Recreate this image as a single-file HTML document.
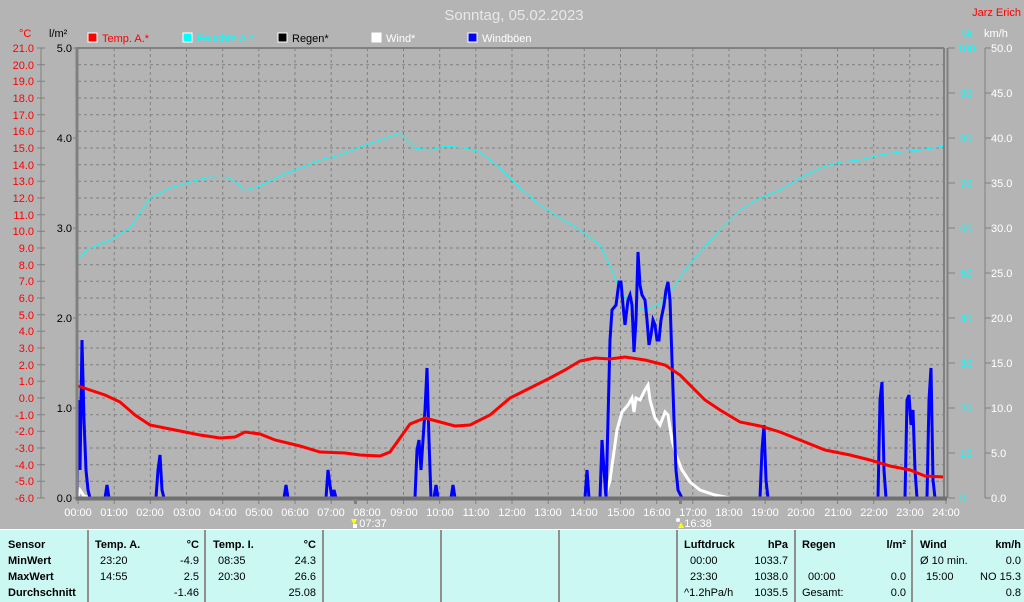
<!DOCTYPE html>
<html><head><meta charset="utf-8"><style>
html,body{margin:0;padding:0;background:#b4b4b4;width:1024px;height:602px;overflow:hidden}
svg{display:block;font-family:"Liberation Sans",sans-serif}
</style></head><body>
<svg width="1024" height="602" viewBox="0 0 1024 602" xmlns="http://www.w3.org/2000/svg">
<rect width="1024" height="602" fill="#b4b4b4"/>
<text x="514" y="20" font-size="15" fill="#e8e8e8" text-anchor="middle">Sonntag, 05.02.2023</text>
<text x="1021" y="16" font-size="11" fill="#ff0000" text-anchor="end">Jarz Erich</text>
<g font-size="11">
<rect x="88" y="33" width="9" height="9" fill="#ff0000" stroke="#fff"/><text x="102" y="42" fill="#ff0000">Temp. A.*</text>
<rect x="183" y="33" width="9" height="9" fill="#00ffff" stroke="#fff"/><text x="197" y="42" fill="#00ffff">Feuchte A.*</text>
<rect x="278" y="33" width="9" height="9" fill="#000" stroke="#fff"/><text x="292" y="42" fill="#000">Regen*</text>
<rect x="372" y="33" width="9" height="9" fill="#fff" stroke="#fff"/><text x="386" y="42" fill="#fff">Wind*</text>
<rect x="468" y="33" width="9" height="9" fill="#0000ff" stroke="#fff"/><text x="482" y="42" fill="#fff">Windböen</text>
</g>
<text x="19" y="37" font-size="11" fill="#ff0000">°C</text>
<text x="49" y="37" font-size="11" fill="#000">l/m²</text>
<text x="962" y="37" font-size="11" fill="#00ffff">%</text>
<text x="984" y="37" font-size="11" fill="#fff">km/h</text>
<g stroke="#808080" stroke-dasharray="3,3" stroke-width="1">
<path d="M78 64.7H944M78 81.3H944M78 98H944M78 114.7H944M78 131.3H944M78 148H944M78 164.7H944M78 181.3H944M78 198H944M78 214.7H944M78 231.3H944M78 248H944M78 264.7H944M78 281.3H944M78 298H944M78 314.7H944M78 331.3H944M78 348H944M78 364.7H944M78 381.3H944M78 398H944M78 414.7H944M78 431.3H944M78 448H944M78 464.7H944M78 481.3H944"/>
<path d="M114.2 48V498M150.3 48V498M186.5 48V498M222.7 48V498M258.8 48V498M295 48V498M331.2 48V498M367.3 48V498M403.5 48V498M439.7 48V498M475.8 48V498M512 48V498M548.2 48V498M584.3 48V498M620.5 48V498M656.7 48V498M692.8 48V498M729 48V498M765.2 48V498M801.3 48V498M837.5 48V498M873.7 48V498M909.8 48V498"/>
</g>
<g stroke="#808080">
<path d="M37 48H45M37 64.7H45M37 81.3H45M37 98H45M37 114.7H45M37 131.3H45M37 148H45M37 164.7H45M37 181.3H45M37 198H45M37 214.7H45M37 231.3H45M37 248H45M37 264.7H45M37 281.3H45M37 298H45M37 314.7H45M37 331.3H45M37 348H45M37 364.7H45M37 381.3H45M37 398H45M37 414.7H45M37 431.3H45M37 448H45M37 464.7H45M37 481.3H45M37 498H45"/>
<path d="M73 48H77M73 138H77M73 228H77M73 318H77M73 408H77M73 498H77"/>
<path d="M948 48H955M948 93H955M948 138H955M948 183H955M948 228H955M948 273H955M948 318H955M948 363H955M948 408H955M948 453H955M948 498H955"/>
<path d="M985 48H991M985 93H991M985 138H991M985 183H991M985 228H991M985 273H991M985 318H991M985 363H991M985 408H991M985 453H991M985 498H991"/>
<path d="M78 499V504M114.2 499V504M150.3 499V504M186.5 499V504M222.7 499V504M258.8 499V504M295 499V504M331.2 499V504M367.3 499V504M403.5 499V504M439.7 499V504M475.8 499V504M512 499V504M548.2 499V504M584.3 499V504M620.5 499V504M656.7 499V504M692.8 499V504M729 499V504M765.2 499V504M801.3 499V504M837.5 499V504M873.7 499V504M909.8 499V504M946 499V504"/>
</g>
<g font-size="11" fill="#ff0000" text-anchor="end">
<text x="34" y="52">21.0</text><text x="34" y="69">20.0</text><text x="34" y="85">19.0</text><text x="34" y="102">18.0</text><text x="34" y="119">17.0</text><text x="34" y="135">16.0</text><text x="34" y="152">15.0</text><text x="34" y="169">14.0</text><text x="34" y="185">13.0</text><text x="34" y="202">12.0</text><text x="34" y="219">11.0</text><text x="34" y="235">10.0</text><text x="34" y="252">9.0</text><text x="34" y="269">8.0</text><text x="34" y="285">7.0</text><text x="34" y="302">6.0</text><text x="34" y="319">5.0</text><text x="34" y="335">4.0</text><text x="34" y="352">3.0</text><text x="34" y="369">2.0</text><text x="34" y="385">1.0</text><text x="34" y="402">0.0</text><text x="34" y="419">-1.0</text><text x="34" y="435">-2.0</text><text x="34" y="452">-3.0</text><text x="34" y="469">-4.0</text><text x="34" y="485">-5.0</text><text x="34" y="502">-6.0</text>
</g>
<g font-size="11" fill="#000" text-anchor="end">
<text x="72" y="52">5.0</text><text x="72" y="142">4.0</text><text x="72" y="232">3.0</text><text x="72" y="322">2.0</text><text x="72" y="412">1.0</text><text x="72" y="502">0.0</text>
</g>
<g font-size="11" fill="#00ffff">
<text x="957" y="52">100</text><text x="960" y="97">90</text><text x="960" y="142">80</text><text x="960" y="187">70</text><text x="960" y="232">60</text><text x="960" y="277">50</text><text x="960" y="322">40</text><text x="960" y="367">30</text><text x="960" y="412">20</text><text x="960" y="457">10</text><text x="960" y="502">0</text>
</g>
<g font-size="11" fill="#fff">
<text x="991" y="52">50.0</text><text x="991" y="97">45.0</text><text x="991" y="142">40.0</text><text x="991" y="187">35.0</text><text x="991" y="232">30.0</text><text x="991" y="277">25.0</text><text x="991" y="322">20.0</text><text x="991" y="367">15.0</text><text x="991" y="412">10.0</text><text x="991" y="457">5.0</text><text x="991" y="502">0.0</text>
</g>
<g font-size="11" fill="#fff" text-anchor="middle">
<text x="78" y="516">00:00</text><text x="114" y="516">01:00</text><text x="150" y="516">02:00</text><text x="187" y="516">03:00</text><text x="223" y="516">04:00</text><text x="259" y="516">05:00</text><text x="295" y="516">06:00</text><text x="331" y="516">07:00</text><text x="367" y="516">08:00</text><text x="404" y="516">09:00</text><text x="440" y="516">10:00</text><text x="476" y="516">11:00</text><text x="512" y="516">12:00</text><text x="548" y="516">13:00</text><text x="584" y="516">14:00</text><text x="621" y="516">15:00</text><text x="657" y="516">16:00</text><text x="693" y="516">17:00</text><text x="729" y="516">18:00</text><text x="765" y="516">19:00</text><text x="801" y="516">20:00</text><text x="838" y="516">21:00</text><text x="874" y="516">22:00</text><text x="910" y="516">23:00</text><text x="946" y="516">24:00</text>
<text x="373" y="527">07:37</text><text x="698" y="527">16:38</text>
</g>
<path d="M351 519l3 6 3-6z" fill="#ffff00"/><rect x="353" y="524" width="4" height="4" fill="#fff"/>
<path d="M678 528l3-6 3 6z" fill="#ffff00"/><circle cx="678" cy="520" r="2" fill="#fff"/>
<polyline fill="none" stroke="#00ffff" stroke-width="1" points="78,258 90,248 110,240 130,228 150,198 170,188 190,182 210,177 230,178 245,190 260,186 280,176 300,168 320,160 340,155 360,147 380,140 400,133 415,148 430,150 445,146 465,148 480,152 500,168 520,188 540,205 560,218 580,230 600,245 612,270 620,290 630,304 645,310 660,304 672,290 685,270 700,252 720,230 740,210 760,198 780,190 800,178 820,168 840,162 860,160 880,155 900,152 920,150 945,146"/>
<polyline fill="none" stroke="#ffffff" stroke-width="3" points="78,496 80,490 84,496 90,498 605,498 610,480 617,430 622,412 628,405 632,398 634,412 636,398 640,400 645,390 648,385 650,400 655,418 660,425 665,412 668,415 672,440 676,455 682,470 690,482 700,490 715,495 730,498"/>
<polyline fill="none" stroke="#0000ff" stroke-width="3" points="77,498 78,400 80,470 82,340 84,420 86,470 88,490 90,498 105,498 107,485 109,498 156,498 158,470 160,455 162,490 164,498 284,498 286,485 288,498 326,498 328,470 330,485 332,498 334,490 336,498 415,498 417,450 419,440 421,470 423,440 425,410 427,368 429,440 431,498 434,498 436,485 438,498 451,498 453,485 455,498 585,498 587,470 589,498 600,498 602,440 604,470 606,498 608,420 610,340 612,310 616,305 619,282 621,282 623,305 625,325 628,300 630,295 632,305 634,352 636,320 638,252 640,285 642,295 645,300 647,320 649,345 651,335 653,320 655,325 657,340 659,340 661,320 664,305 666,290 668,282 670,300 672,360 674,420 676,470 678,490 682,498 760,498 762,450 764,425 766,480 768,498 878,498 880,400 882,382 884,470 886,498 905,498 907,400 909,395 911,425 913,410 915,470 917,498 927,498 929,400 931,368 933,480 935,498 945,498"/>
<polyline fill="none" stroke="#ff0000" stroke-width="3" points="78,386 90,390 105,395 120,402 135,415 150,425 165,428 185,432 200,435 220,438 235,437 245,432 260,434 275,440 300,446 320,452 345,453 360,455 380,456 390,452 400,438 410,424 425,418 440,422 455,426 470,425 490,415 510,398 530,388 550,378 565,370 580,361 595,358 610,359 625,357 645,360 665,365 680,375 690,385 705,400 720,410 740,422 760,426 780,432 800,440 825,450 850,455 870,460 890,466 910,470 925,476 945,477"/>
<g stroke="#808080" fill="none">
<path d="M77 48V498" stroke-width="3"/>
<path d="M76 48H944" stroke-width="2"/>
<path d="M944 48V498M947.5 48V498" stroke-width="2"/>
<path d="M41 48V498" stroke-width="1"/>
<path d="M985 48V498" stroke-width="1"/>
</g>
<path d="M75.5 498.5H947" stroke="#707070" stroke-width="4"/>
<rect x="354" y="499" width="3" height="5" fill="#808080"/><rect x="679" y="499" width="3" height="5" fill="#808080"/>
<rect x="0" y="530" width="1024" height="72" fill="#ccf8f4"/>
<path d="M0 529.5H1024" stroke="#fff" stroke-width="1"/>
<g stroke="#909090" stroke-width="2"><path d="M88 530V602M205 530V602M323 530V602M441 530V602M559 530V602M677 530V602M795 530V602M912 530V602"/></g>
<g font-size="11" fill="#000">
<g font-weight="bold"><text x="8" y="548">Sensor</text><text x="8" y="564">MinWert</text><text x="8" y="580">MaxWert</text><text x="8" y="596">Durchschnitt</text>
<text x="95" y="548">Temp. A.</text><text x="199" y="548" text-anchor="end">°C</text>
<text x="213" y="548">Temp. I.</text><text x="316" y="548" text-anchor="end">°C</text>
<text x="684" y="548">Luftdruck</text><text x="788" y="548" text-anchor="end">hPa</text>
<text x="802" y="548">Regen</text><text x="906" y="548" text-anchor="end">l/m²</text>
<text x="920" y="548">Wind</text><text x="1021" y="548" text-anchor="end">km/h</text></g>
<text x="100" y="564">23:20</text><text x="199" y="564" text-anchor="end">-4.9</text>
<text x="100" y="580">14:55</text><text x="199" y="580" text-anchor="end">2.5</text>
<text x="199" y="596" text-anchor="end">-1.46</text>
<text x="218" y="564">08:35</text><text x="316" y="564" text-anchor="end">24.3</text>
<text x="218" y="580">20:30</text><text x="316" y="580" text-anchor="end">26.6</text>
<text x="316" y="596" text-anchor="end">25.08</text>
<text x="690" y="564">00:00</text><text x="788" y="564" text-anchor="end">1033.7</text>
<text x="690" y="580">23:30</text><text x="788" y="580" text-anchor="end">1038.0</text>
<text x="684" y="596">^1.2hPa/h</text><text x="788" y="596" text-anchor="end">1035.5</text>
<text x="808" y="580">00:00</text><text x="906" y="580" text-anchor="end">0.0</text>
<text x="802" y="596">Gesamt:</text><text x="906" y="596" text-anchor="end">0.0</text>
<text x="920" y="564">Ø 10 min.</text><text x="1021" y="564" text-anchor="end">0.0</text>
<text x="926" y="580">15:00</text><text x="1021" y="580" text-anchor="end">NO 15.3</text>
<text x="1021" y="596" text-anchor="end">0.8</text>
</g>
</svg>
</body></html>
